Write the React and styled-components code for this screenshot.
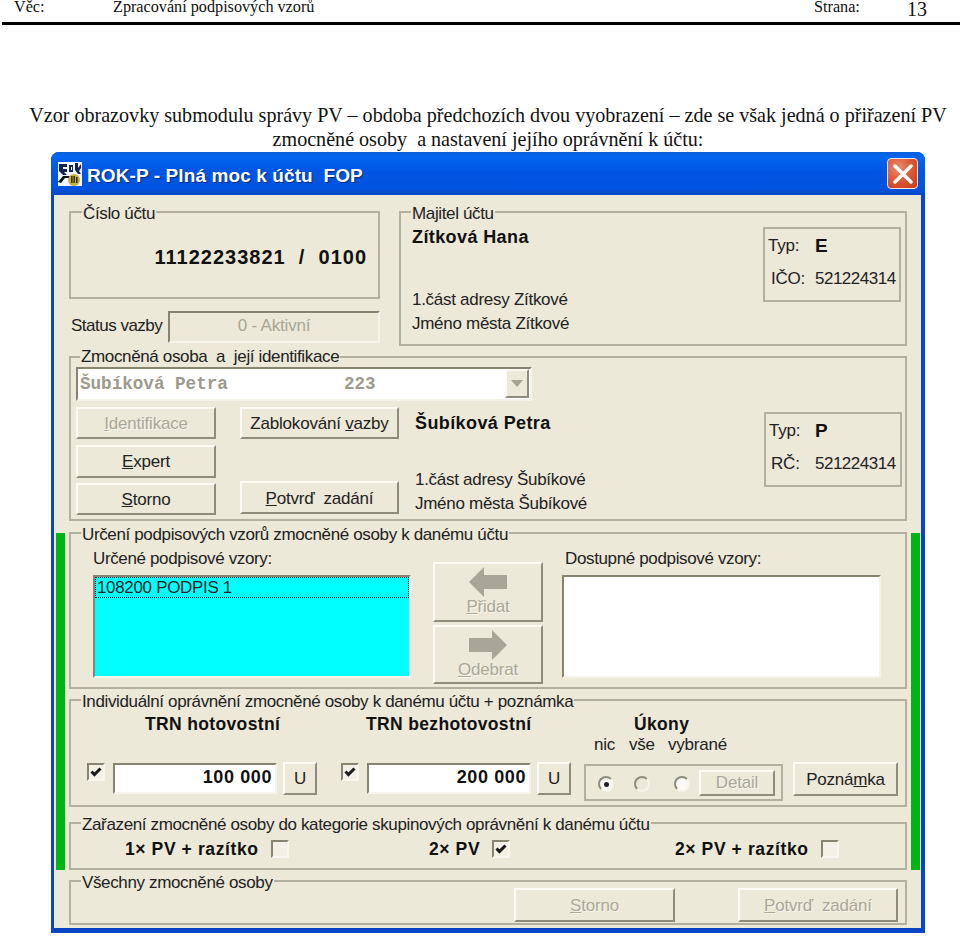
import React from "react";
import styled, { createGlobalStyle } from "styled-components";

const Global = createGlobalStyle`
  html, body { margin: 0; padding: 0; background: #fff; }
  body { width: 960px; height: 937px; overflow: hidden; font-family: "Liberation Serif", serif; color: #111; }
  * { box-sizing: border-box; }
`;

const Page = styled.div`
  width: 960px;
  height: 937px;
  display: flex;
  flex-direction: column;
`;

const DocHeader = styled.header`
  margin-left: 2px;
  height: 25px;
  border-bottom: 3px solid #000;
  display: grid;
  grid-template-columns: 99px 701px 93px 1fr;
  padding-left: 12px;
  font-size: 16.2px;
  line-height: 14px;
`;

const PageNo = styled.span`
  font-size: 20px;
  line-height: 18px;
`;

const Heading = styled.h1`
  margin: 79px 0 0 18px;
  width: 940px;
  font-size: 20.1px;
  line-height: 23.5px;
  font-weight: 400;
  text-align: center;
  white-space: pre-wrap;
  height: 48px;
  color: #111;
`;

const Win = styled.div`
  margin-left: 51px;
  width: 874px;
  height: 781px;
  border-radius: 8px 8px 0 0;
  background: #0a45c4;
  padding: 0 4px 5px 3px;
  display: flex;
  flex-direction: column;
  font-family: "Liberation Sans", sans-serif;
  color: #222;
  font-size: 17px;
  letter-spacing: -0.2px;
`;

const TitleBar = styled.div`
  height: 43px;
  margin: 0 -4px 0 -3px;
  border-radius: 8px 8px 0 0;
  background: linear-gradient(#0a5fd8 0, #0366ee 10%, #0056e4 45%, #0053de 85%, #0a48c4 100%);
  display: flex;
  align-items: center;
  padding: 0 7px 0 7px;
`;

const TitleText = styled.span`
  margin-left: 5px;
  padding-top: 5px;
  color: #fff;
  font-size: 19px;
  font-weight: 700;
  letter-spacing: 0.1px;
  white-space: pre;
  flex: 1;
  text-shadow: 1px 1px 1px #0a2a80;
`;

const CloseBtn = styled.span`
  width: 31px;
  height: 31px;
  border: 1.5px solid #f3e6e0;
  border-radius: 4px;
  background: radial-gradient(circle at 35% 30%, #ea8a6a, #d8502c 60%, #c43a18);
  display: flex;
  align-items: center;
  justify-content: center;
`;

const Client = styled.div`
  flex: 1;
  background: #ece9d8;
  padding: 8px 1px 0 2px;
  display: flex;
  flex-direction: column;
`;

const Inset = styled.div`
  padding: 0 13px;
`;

const TopRow = styled(Inset)`
  display: grid;
  grid-template-columns: 311px 508px;
  column-gap: 19px;
`;

const Group = styled.fieldset`
  margin: ${p => p.$mt || 0}px 0 0;
  min-width: 0;
  height: ${p => p.$h}px;
  border: 2px solid #b2b09f;
  padding: 0;
  display: block;
`;

const Legend = styled.legend`
  margin-left: ${p => p.$ml ?? 10}px;
  padding: 0 1px;
  height: 18px;
  line-height: ${p => p.$lh ?? 22}px;
  letter-spacing: -0.36px;
  white-space: pre;
`;

const AccountBody = styled.div`
  height: 72px;
  display: flex;
  align-items: center;
  justify-content: flex-end;
  padding-right: 11px;
`;

const AccountNo = styled.b`
  font-size: 20px;
  letter-spacing: 1px;
  white-space: pre;
  color: #111;
`;

const StatusRow = styled.div`
  margin-top: 12px;
  display: flex;
  align-items: center;
  padding-left: 2px;
`;

const StatusLabel = styled.span`
  width: 97px;
  padding-bottom: 3px;
  letter-spacing: -0.5px;
  white-space: nowrap;
`;

const StatusField = styled.div`
  width: 212px;
  height: 32px;
  padding-bottom: 2px;
  border: 2px solid;
  border-color: #87856f #f6f4ea #f6f4ea #87856f;
  color: #a8a695;
  display: flex;
  align-items: center;
  justify-content: center;
`;

const OwnerBody = styled.div`
  display: flex;
  justify-content: space-between;
  padding: 6px 4px 0 11px;
`;

const PersonText = styled.div`
  display: flex;
  flex-direction: column;
`;

const PersonName = styled.b`
  height: 20px;
  line-height: 20px;
  font-size: 18px;
  letter-spacing: 0.4px;
  margin-bottom: ${p => p.$gap}px;
  color: #111;
`;

const AddrLine = styled.span`
  height: 24px;
  line-height: 26px;
  letter-spacing: -0.28px;
  white-space: nowrap;
`;

const IdBox = styled.div`
  width: 138px;
  height: 75px;
  border: 2px solid #b2b09f;
  padding-left: ${p => p.$pl}px;
  display: grid;
  grid-template-columns: ${p => p.$col}px 1fr;
  grid-auto-rows: 33px;
  align-items: center;
`;

const IdLabel = styled.span`
  padding-left: ${p => p.$indent || 0}px;
`;

const IdBig = styled.b`
  font-size: 19px;
  color: #111;
`;

const IdNumber = styled.span`
  letter-spacing: -0.5px;
  white-space: nowrap;
`;

const PersonBody = styled.div`
  padding: 1px 3px 0 5px;
`;

const Combo = styled.div`
  width: 456px;
  height: 34px;
  border: 2px solid;
  border-color: #87856f #f6f4ea #f6f4ea #87856f;
  background: #fff;
  display: flex;
  align-items: stretch;
  padding: 0 1px 1px 2px;
`;

const ComboText = styled.span`
  flex: 1;
  font-family: "Liberation Mono", monospace;
  font-weight: 700;
  font-size: 17.6px;
  letter-spacing: 0;
  line-height: 30px;
  color: #9c9a8c;
  white-space: pre;
`;

const ComboArrow = styled.span`
  width: 24px;
  background: #ece9d8;
  border: 2px solid;
  border-color: #fbfaf3 #8e8c7b #8e8c7b #fbfaf3;
  display: flex;
  align-items: center;
  justify-content: center;
  &::after {
    content: "";
    border: 6px solid transparent;
    border-top: 7px solid #a5a394;
    border-bottom: 0;
  }
`;

const PersonRow = styled.div`
  margin-top: 6px;
  display: grid;
  grid-template-columns: 164px 175px 1fr 138px;
`;

const BtnCol = styled.div`
  height: 108px;
  display: flex;
  flex-direction: column;
  justify-content: space-between;
  padding-bottom: ${p => p.$pb || 0}px;
`;

const Btn = styled.button`
  width: ${p => (p.$w ? `${p.$w}px` : "100%")};
  height: ${p => p.$h}px;
  margin: 0;
  padding: ${p => p.$pt ?? 2}px 0 0;
  background: #ece9d8;
  border: 2px solid;
  border-color: #fbfaf3 #8e8c7b #8e8c7b #fbfaf3;
  font: inherit;
  letter-spacing: inherit;
  color: ${p => (p.disabled ? "#aaa897" : "#222")};
  text-shadow: ${p => (p.disabled ? "1px 1px 0 #f8f6ec" : "none")};
  white-space: pre;
  flex: none;
`;

const IconBtn = styled(Btn)`
  display: flex;
  flex-direction: column;
  align-items: center;
  justify-content: flex-start;
  padding-top: 3px;
  line-height: 20px;
`;

const PersonInfo = styled.div`
  height: 108px;
  display: flex;
  flex-direction: column;
  justify-content: space-between;
  padding-top: 6px;
`;

const IdSlot = styled.div`
  padding-top: 5px;
`;

const Banded = styled.div`
  margin-top: 3px;
  display: grid;
  grid-template-columns: 9px 1fr 9px;
  column-gap: 4px;
`;

const GreenBar = styled.div`
  margin-top: 9px;
  background: #00b414;
`;

const SpecimenBody = styled.div`
  padding: 7px 0 0 22px;
  display: grid;
  grid-template-columns: 340px 129px 319px;
`;

const ListCol = styled.div`
  display: flex;
  flex-direction: column;
  width: ${p => p.$w}px;
`;

const ListCaption = styled.span`
  height: 18px;
  line-height: 20px;
  margin-bottom: 8px;
  padding-left: ${p => p.$pl || 0}px;
  letter-spacing: -0.36px;
  white-space: nowrap;
`;

const ListBox = styled.div`
  height: 103px;
  border: 2px solid;
  border-color: #87856f #f6f4ea #f6f4ea #87856f;
  background: ${p => p.$bg};
`;

const ListItem = styled.div`
  height: 21px;
  line-height: 19px;
  border: 1px dotted #333;
  padding-left: 1px;
  letter-spacing: -0.33px;
`;

const MoveCol = styled.div`
  width: 110px;
  padding-top: 13px;
  display: flex;
  flex-direction: column;
  gap: 3px;
`;

const RightsBody = styled.div`
  padding: 5px 0 0 16px;
  display: grid;
  grid-template-columns: 254px 243px 209px 105px;
`;

const Col = styled.div`
  display: flex;
  flex-direction: column;
`;

const ColTitle = styled.b`
  height: 20px;
  line-height: 20px;
  font-size: 17.5px;
  letter-spacing: 0.35px;
  padding-left: ${p => p.$pl || 0}px;
  color: #111;
  white-space: nowrap;
`;

const Controls = styled.div`
  margin-top: 28px;
  display: flex;
  align-items: flex-start;
`;

const Check = styled.span`
  flex: none;
  width: 18px;
  height: 18px;
  margin-top: ${p => p.$mt || 0}px;
  border: 2px solid;
  border-color: #87856f #f8f6ee #f8f6ee #87856f;
  background: #f3f1e6;
  display: flex;
  align-items: center;
  justify-content: center;
`;

const Amount = styled.div`
  width: 164px;
  height: 31px;
  margin: 1px 6px 0 8px;
  border: 2px solid;
  border-color: #87856f #f6f4ea #f6f4ea #87856f;
  background: #fff;
  font-size: 18px;
  font-weight: 700;
  line-height: 25px;
  letter-spacing: 0.6px;
  text-align: right;
  padding-right: 3px;
  color: #111;
`;

const ModeLabels = styled.div`
  height: 19px;
  line-height: 19px;
  margin-top: 1px;
  display: grid;
  grid-template-columns: 35px 39px 1fr;
  padding-left: 10px;
  white-space: nowrap;
`;

const RadioBox = styled.div`
  margin-top: 10px;
  width: 199px;
  height: 37px;
  border: 2px solid #b2b09f;
  padding-left: 12px;
  display: grid;
  grid-template-columns: 36px 40px 25px 76px;
  align-items: center;
`;

const Radio = styled.span`
  width: 16px;
  height: 16px;
  margin-top: 3px;
  border-radius: 50%;
  border: 2px solid;
  border-color: #8e8c7b #f5f3ea #f5f3ea #8e8c7b;
  background: ${p => (p.$white ? "#fbfaf5" : "#ece9d8")};
  display: flex;
  align-items: center;
  justify-content: center;
  &::after {
    content: "";
    width: 5px;
    height: 5px;
    border-radius: 50%;
    background: ${p => (p.$on ? "#222" : "transparent")};
  }
`;

const NoteSlot = styled.div`
  padding-top: 48px;
`;

const CategoryBody = styled.div`
  padding: 8px 0 0 54px;
  display: grid;
  grid-template-columns: 304px 246px 1fr;
`;

const CategoryItem = styled.div`
  display: flex;
  align-items: center;
  gap: 12px;
  height: 18px;
`;

const CategoryText = styled.b`
  font-size: 17.5px;
  letter-spacing: 0.6px;
  color: #111;
  white-space: nowrap;
`;

const AllBody = styled.div`
  margin-top: -2px;
  padding-right: 7px;
  display: flex;
  justify-content: flex-end;
  gap: 63px;
`;

const Tick = () => (
  <svg width="12" height="10" viewBox="0 0 12 10">
    <path d="M1.5 4.5 L4.4 7.5 L10.5 1.5" fill="none" stroke="#1a1a1a" strokeWidth="3" />
  </svg>
);

const Logo = () => (
  <svg width="24" height="24" viewBox="0 0 24 24" style={{ flex: "none" }}>
    <rect width="24" height="24" fill="#f4f6ff" />
    <path d="M1 2h8v3H5v2h4v3H6l3 3H5L1 9zM11 3h4v7h-4zM17 1h3v5l3-4v4l-2 3 2 3h-3l-3-4z" fill="#14205a" />
    <path d="M13 5h1v3h-1z" fill="#f4f6ff" />
    <path d="M0 20 L5 14 h7 v2 H7 L3 21z" fill="#111" />
    <circle cx="16" cy="18" r="6" fill="#c6b23a" />
    <path d="M13 14h1.6v7H13zM15.4 14H17v7h-1.6zM18 15h1.6v6H18z" fill="#3a3510" />
  </svg>
);

const ArrowLeft = () => (
  <svg width="38" height="30" viewBox="0 0 38 30" style={{ display: "block" }}>
    <path d="M0 15 L15 0 V8 H38 V22 H15 V30 Z" fill="#a9a698" />
  </svg>
);

const ArrowRight = () => (
  <svg width="38" height="30" viewBox="0 0 38 30" style={{ display: "block" }}>
    <path d="M38 15 L23 0 V8 H0 V22 H23 V30 Z" fill="#a9a698" />
  </svg>
);

export default function App() {
  return (
    <Page>
      <Global />
      <DocHeader>
        <span>Věc:</span>
        <span>Zpracování podpisových vzorů</span>
        <span>Strana:</span>
        <PageNo>13</PageNo>
      </DocHeader>
      <Heading>
        {"Vzor obrazovky submodulu správy PV – obdoba předchozích dvou vyobrazení – zde se však jedná o přiřazení PV\nzmocněné osoby  a nastavení jejího oprávnění k účtu:"}
      </Heading>
      <Win>
        <TitleBar>
          <Logo />
          <TitleText>{"ROK-P - Plná moc k účtu  FOP"}</TitleText>
          <CloseBtn>
            <svg width="20" height="20" viewBox="0 0 20 20">
              <path d="M2 2 L18 18 M18 2 L2 18" stroke="#fff" strokeWidth="3.4" strokeLinecap="round" />
            </svg>
          </CloseBtn>
        </TitleBar>
        <Client>
          <TopRow>
            <div>
              <Group $h={96}>
                <Legend $ml={11}>Číslo účtu</Legend>
                <AccountBody>
                  <AccountNo>{"11122233821  /  0100"}</AccountNo>
                </AccountBody>
              </Group>
              <StatusRow>
                <StatusLabel>Status vazby</StatusLabel>
                <StatusField>0 - Aktivní</StatusField>
              </StatusRow>
            </div>
            <Group $h={143}>
              <Legend>Majitel účtu</Legend>
              <OwnerBody>
                <PersonText>
                  <PersonName $gap={40}>Zítková Hana</PersonName>
                  <AddrLine>1.část adresy Zítkové</AddrLine>
                  <AddrLine>Jméno města Zítkové</AddrLine>
                </PersonText>
                <IdBox $pl={3} $col={47}>
                  <IdLabel>Typ:</IdLabel>
                  <IdBig>E</IdBig>
                  <IdLabel $indent={3}>IČO:</IdLabel>
                  <IdNumber>521224314</IdNumber>
                </IdBox>
              </OwnerBody>
            </Group>
          </TopRow>
          <Inset>
            <Group $h={173} $mt={2}>
              <Legend $ml={9} $lh={18}>Zmocněná osoba  a  její identifikace</Legend>
              <PersonBody>
                <Combo>
                  <ComboText>{"Šubíková Petra           223"}</ComboText>
                  <ComboArrow />
                </Combo>
                <PersonRow>
                  <BtnCol>
                    <Btn disabled $h={32} $w={140}><u>I</u>dentifikace</Btn>
                    <Btn $h={33} $w={140}><u>E</u>xpert</Btn>
                    <Btn $h={32} $w={140}><u>S</u>torno</Btn>
                  </BtnCol>
                  <BtnCol $pb={1}>
                    <Btn $h={32} $w={159}>Zablokování <u>v</u>azby</Btn>
                    <Btn $h={33} $w={159}><u>P</u>otvrď  zadání</Btn>
                  </BtnCol>
                  <PersonInfo>
                    <PersonName $gap={0}>Šubíková Petra</PersonName>
                    <div>
                      <AddrLine as="div">1.část adresy Šubíkové</AddrLine>
                      <AddrLine as="div">Jméno města Šubíkové</AddrLine>
                    </div>
                  </PersonInfo>
                  <IdSlot>
                    <IdBox $pl={3} $col={46}>
                      <IdLabel>Typ:</IdLabel>
                      <IdBig>P</IdBig>
                      <IdLabel $indent={2}>RČ:</IdLabel>
                      <IdNumber>521224314</IdNumber>
                    </IdBox>
                  </IdSlot>
                </PersonRow>
              </PersonBody>
            </Group>
          </Inset>
          <Banded>
            <GreenBar />
            <div>
              <Group $h={165}>
                <Legend>Určení podpisových vzorů zmocněné osoby k danému účtu</Legend>
                <SpecimenBody>
                  <ListCol $w={318}>
                    <ListCaption>Určené podpisové vzory:</ListCaption>
                    <ListBox $bg="#00ffff">
                      <ListItem>108200 PODPIS 1</ListItem>
                    </ListBox>
                  </ListCol>
                  <MoveCol>
                    <IconBtn disabled $h={60}>
                      <ArrowLeft />
                      <span><u>P</u>řidat</span>
                    </IconBtn>
                    <IconBtn disabled $h={59}>
                      <ArrowRight />
                      <span><u>O</u>debrat</span>
                    </IconBtn>
                  </MoveCol>
                  <ListCol $w={319}>
                    <ListCaption $pl={3}>Dostupné podpisové vzory:</ListCaption>
                    <ListBox $bg="#ffffff" />
                  </ListCol>
                </SpecimenBody>
              </Group>
              <Group $h={116} $mt={2}>
                <Legend>Individuální oprávnění zmocněné osoby k danému účtu + poznámka</Legend>
                <RightsBody>
                  <Col>
                    <ColTitle $pl={58}>TRN hotovostní</ColTitle>
                    <Controls>
                      <Check $mt={1}><Tick /></Check>
                      <Amount>100 000</Amount>
                      <Btn $w={34} $h={33} $pt={0}>U</Btn>
                    </Controls>
                  </Col>
                  <Col>
                    <ColTitle $pl={25}>TRN bezhotovostní</ColTitle>
                    <Controls>
                      <Check $mt={1}><Tick /></Check>
                      <Amount>200 000</Amount>
                      <Btn $w={34} $h={33} $pt={0}>U</Btn>
                    </Controls>
                  </Col>
                  <Col>
                    <ColTitle $pl={50}>Úkony</ColTitle>
                    <ModeLabels>
                      <span>nic</span>
                      <span>vše</span>
                      <span>vybrané</span>
                    </ModeLabels>
                    <RadioBox>
                      <Radio $on $white />
                      <Radio />
                      <Radio $white />
                      <Btn disabled $w={76} $h={26} $pt={0}>Detail</Btn>
                    </RadioBox>
                  </Col>
                  <NoteSlot>
                    <Btn $w={105} $h={34}>Pozná<u>m</u>ka</Btn>
                  </NoteSlot>
                </RightsBody>
              </Group>
              <Group $h={56} $mt={7}>
                <Legend>Zařazení zmocněné osoby do kategorie skupinových oprávnění k danému účtu</Legend>
                <CategoryBody>
                  <CategoryItem>
                    <CategoryText>1× PV + razítko</CategoryText>
                    <Check />
                  </CategoryItem>
                  <CategoryItem>
                    <CategoryText>2× PV</CategoryText>
                    <Check><Tick /></Check>
                  </CategoryItem>
                  <CategoryItem>
                    <CategoryText>2× PV + razítko</CategoryText>
                    <Check />
                  </CategoryItem>
                </CategoryBody>
              </Group>
            </div>
            <GreenBar />
          </Banded>
          <Inset>
            <Group $h={53} $mt={2}>
              <Legend>Všechny zmocněné osoby</Legend>
              <AllBody>
                <Btn disabled $w={161} $h={34}><u>S</u>torno</Btn>
                <Btn disabled $w={160} $h={34}><u>P</u>otvrď  zadání</Btn>
              </AllBody>
            </Group>
          </Inset>
        </Client>
      </Win>
    </Page>
  );
}
